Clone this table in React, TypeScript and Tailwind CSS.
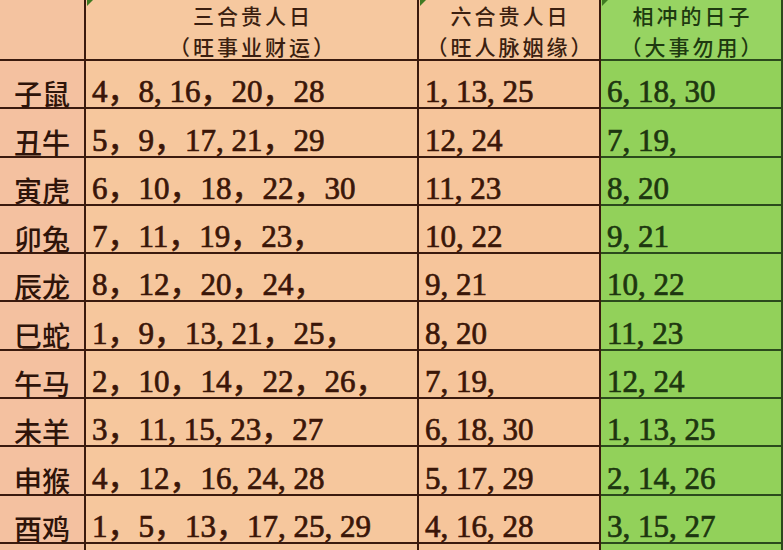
const rows: [string, string, string, string][] = [
  ['子鼠', '4，8, 16，20，28', '1, 13, 25', '6, 18, 30'],
  ['丑牛', '5，9，17, 21，29', '12, 24', '7, 19,'],
  ['寅虎', '6，10，18，22，30', '11, 23', '8, 20'],
  ['卯兔', '7，11，19，23，', '10, 22', '9, 21'],
  ['辰龙', '8，12，20，24，', '9, 21', '10, 22'],
  ['巳蛇', '1，9，13, 21，25，', '8, 20', '11, 23'],
  ['午马', '2，10，14，22，26，', '7, 19,', '12, 24'],
  ['未羊', '3，11, 15, 23，27', '6, 18, 30', '1, 13, 25'],
  ['申猴', '4，12，16, 24, 28', '5, 17, 29', '2, 14, 26'],
  ['酉鸡', '1，5，13，17, 25, 29', '4, 16, 28', '3, 15, 27'],
]

const num =
  'flex items-end pl-[6px] font-["Liberation_Serif","Noto_Sans_CJK_SC",serif] text-[31px] leading-none whitespace-pre [-webkit-text-stroke:0.7px_currentColor]'
const head =
  'h-[61px] border-r-2 border-b-2 flex flex-col items-center font-["Noto_Sans_CJK_SC",sans-serif] font-medium text-[21px] leading-[30.5px] tracking-[3px]'

function Marker({ left }: { left: string }) {
  return (
    <div
      className={`absolute top-0 ${left} w-0 h-0 border-t-[6px] border-r-[6px] border-t-[#3f7a22] border-r-transparent`}
    />
  )
}

export default function App() {
  return (
    <div className="relative w-[783px] h-[550px] overflow-hidden bg-[#f5c49b]">
      <div className="grid grid-cols-[86px_333px_182px_182px]">
        {/* header */}
        <div className="h-[61px] border-r-2 border-b-2 border-[#3a1a0e] bg-[#f4c3a0]" />
        <div className={`${head} border-[#3a1a0e] bg-[#f6c89f] text-[#3b1f10]`}>
          <div className="pl-[3px]">三合贵人日</div>
          <div className="pl-[3px]">（旺事业财运）</div>
        </div>
        <div className={`${head} border-[#3a1a0e] bg-[#f6c89f] text-[#3b1f10]`}>
          <div className="pl-[3px]">六合贵人日</div>
          <div className="pl-[3px]">（旺人脉姻缘）</div>
        </div>
        <div className={`${head} border-[#2b4a1c] bg-[#97d462] text-[#1e3a10]`}>
          <div className="pl-[3px]">相冲的日子</div>
          <div className="pl-[3px]">（大事勿用）</div>
        </div>

        {[...rows, ['', '', '', ''] as [string, string, string, string]].map(([animal, a, b, c], i) => (
          <div key={i} className="contents">
            <div className="h-[48.3px] border-r-2 border-b-2 border-[#3a1a0e] bg-[#f4c1a0] flex items-end justify-center font-['Noto_Sans_CJK_SC',sans-serif] font-medium text-[28px] leading-none text-[#2e140a]">
              {animal}
            </div>
            <div className={`h-[48.3px] border-r-2 border-b-2 border-[#3a1a0e] bg-[#f6c79d] text-[#3a1608] ${num}`}>
              {a}
            </div>
            <div className={`h-[48.3px] border-r-2 border-b-2 border-[#3a1a0e] bg-[#f6c59b] text-[#3a1608] ${num}`}>
              {b}
            </div>
            <div className={`h-[48.3px] border-r-2 border-b-2 border-[#2b4a1c] bg-[#92d15a] text-[#1d3610] ${num}`}>
              {c}
            </div>
          </div>
        ))}
      </div>
      <Marker left="left-[87px]" />
      <Marker left="left-[420px]" />
      <Marker left="left-[602px]" />
    </div>
  )
}
